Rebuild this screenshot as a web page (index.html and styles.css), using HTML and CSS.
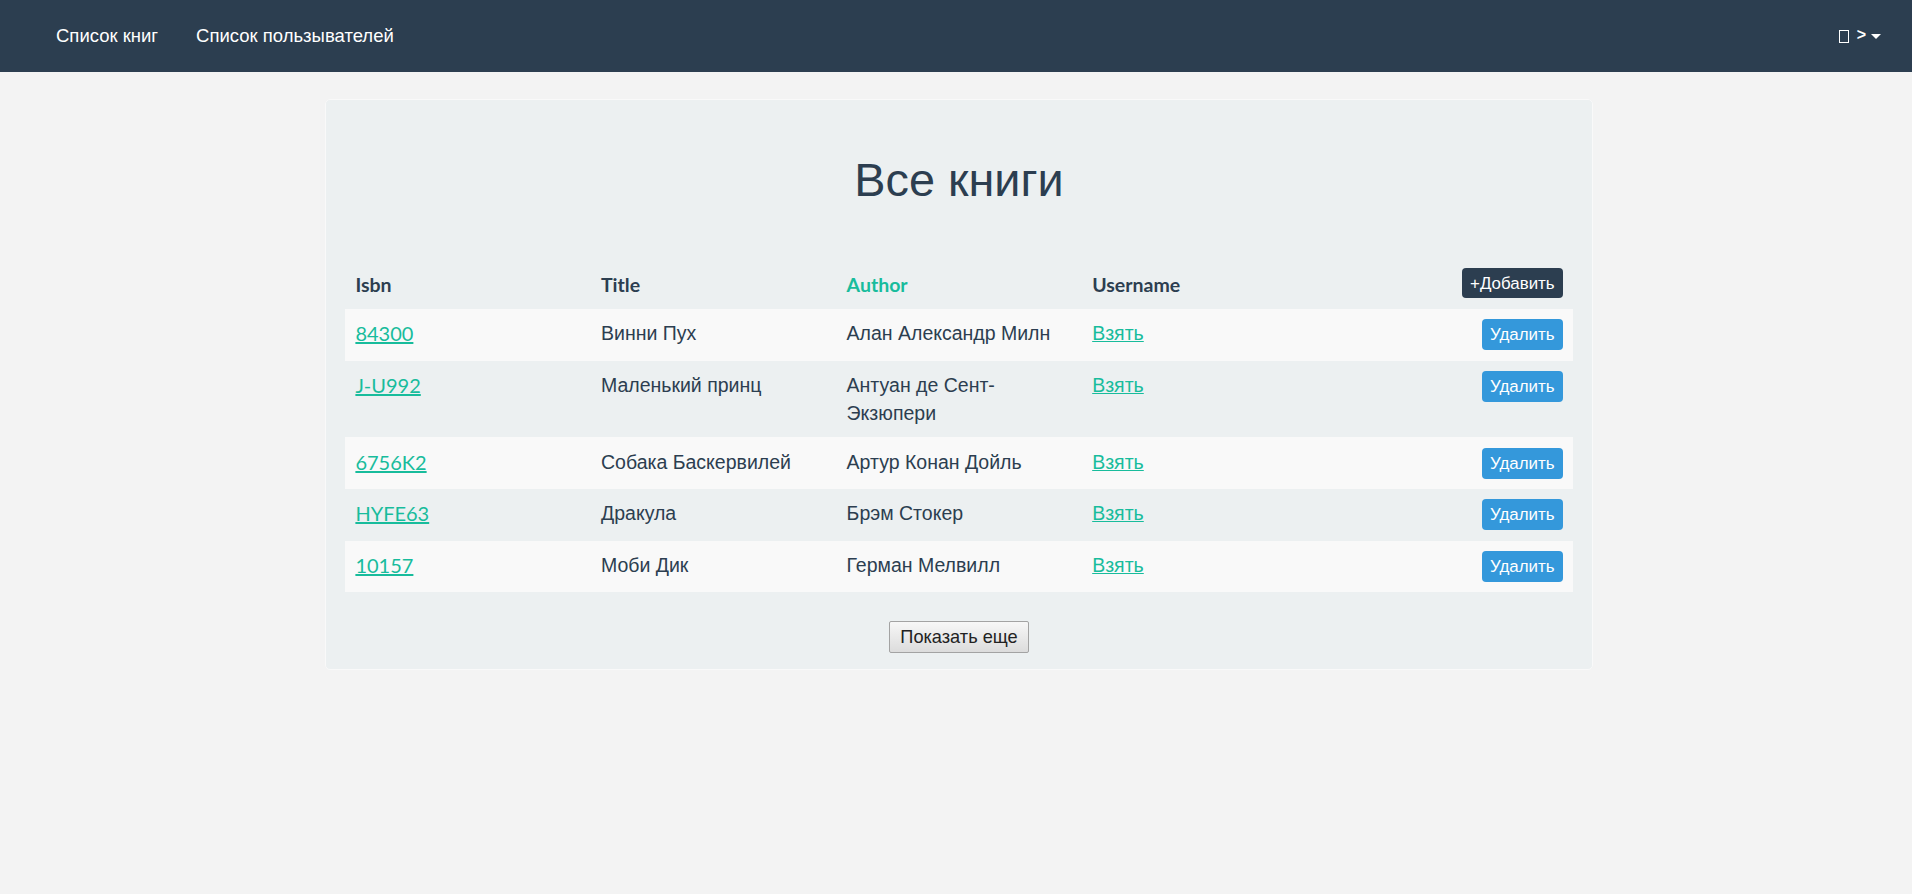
FILE: index.html
```html
<!DOCTYPE html>
<html lang="ru">
<head>
<meta charset="utf-8">
<title>Все книги</title>
<link rel="stylesheet" href="styles.css">
</head>
<body>
<nav class="navbar">
  <ul class="nav-left">
    <li><a class="nav-link" href="#">Список книг</a></li>
    <li><a class="nav-link" href="#">Список пользывателей</a></li>
  </ul>
  <div class="nav-right">
    <span class="tofu"></span>
    <span class="gt">&gt;</span>
    <span class="caret"></span>
  </div>
</nav>
<main class="page">
  <section class="well">
    <h1 class="title">Все книги</h1>
    <table class="books">
      <thead>
        <tr>
          <th>Isbn</th>
          <th>Title</th>
          <th class="sorted">Author</th>
          <th>Username</th>
          <th class="act"><button class="btn btn-add">+Добавить</button></th>
        </tr>
      </thead>
      <tbody>
        <tr>
          <td><a class="isbn" href="#">84300</a></td>
          <td>Винни Пух</td>
          <td>Алан Александр Милн</td>
          <td><a class="take" href="#">Взять</a></td>
          <td class="act"><button class="btn btn-del">Удалить</button></td>
        </tr>
        <tr>
          <td><a class="isbn" href="#">J-U992</a></td>
          <td>Маленький принц</td>
          <td>Антуан де Сент-Экзюпери</td>
          <td><a class="take" href="#">Взять</a></td>
          <td class="act"><button class="btn btn-del">Удалить</button></td>
        </tr>
        <tr>
          <td><a class="isbn" href="#">6756K2</a></td>
          <td>Собака Баскервилей</td>
          <td>Артур Конан Дойль</td>
          <td><a class="take" href="#">Взять</a></td>
          <td class="act"><button class="btn btn-del">Удалить</button></td>
        </tr>
        <tr>
          <td><a class="isbn" href="#">HYFE63</a></td>
          <td>Дракула</td>
          <td>Брэм Стокер</td>
          <td><a class="take" href="#">Взять</a></td>
          <td class="act"><button class="btn btn-del">Удалить</button></td>
        </tr>
        <tr>
          <td><a class="isbn" href="#">10157</a></td>
          <td>Моби Дик</td>
          <td>Герман Мелвилл</td>
          <td><a class="take" href="#">Взять</a></td>
          <td class="act"><button class="btn btn-del">Удалить</button></td>
        </tr>
      </tbody>
    </table>
    <div class="more">
      <button class="btn-more">Показать еще</button>
    </div>
  </section>
</main>
</body>
</html>
```
FILE: styles.css
```css
html, body {
  margin: 0;
  padding: 0;
}

body {
  background: #f3f3f3;
  color: #2c3e50;
  font-family: "Liberation Sans", Arial, sans-serif;
  font-size: 19.5px;
  line-height: 27.86px;
}

/* ---------- navbar ---------- */
.navbar {
  height: 72px;
  background: #2c3e50;
  display: flex;
  align-items: center;
  justify-content: space-between;
  padding: 0 31px 0 37px;
  box-sizing: border-box;
}

.nav-left {
  list-style: none;
  margin: 0;
  padding: 0;
  display: flex;
}

.nav-link {
  display: block;
  padding: 0 19px;
  color: #ffffff;
  text-decoration: none;
  font-size: 18.5px;
  line-height: 27px;
  position: relative;
  top: -1px;
}

.nav-right {
  display: flex;
  align-items: center;
  color: #ffffff;
}

.tofu {
  display: inline-block;
  width: 8px;
  height: 11px;
  border: 1px solid #ffffff;
  margin-right: 8px;
  margin-left: 1px;
}

.gt {
  font-family: "Liberation Sans", Arial, sans-serif;
  font-weight: 700;
  font-size: 16px;
  line-height: 16px;
  margin-right: 5px;
  position: relative;
  top: -1px;
}

.caret {
  display: inline-block;
  width: 0;
  height: 0;
  border-top: 5px solid #ffffff;
  border-left: 5px solid transparent;
  border-right: 5px solid transparent;
}

/* ---------- page ---------- */
.page {
  padding: 27px 0 0 325px;
}

.well {
  width: 1268px;
  box-sizing: border-box;
  background: #ecf0f1;
  border: 1px solid #f9f9f9;
  border-radius: 5px;
  padding: 55px 19px 16px 19px;
}

.title {
  margin: 0;
  font-size: 46.8px;
  font-weight: 400;
  line-height: 1.1;
  text-align: center;
}

/* ---------- table ---------- */
.books {
  width: 100%;
  margin-top: 51.5px;
  border-collapse: collapse;
  table-layout: fixed;
}

.books th,
.books td {
  padding: 11.6px 10.4px 9.2px;
  text-align: left;
  vertical-align: top;
}

.books thead th {
  padding: 10.4px;
  font-family: Lato, "Liberation Sans", sans-serif;
  font-weight: 700;
  vertical-align: bottom;
}

.books thead th.sorted {
  color: #18bc9c;
}

.books tbody tr:nth-child(odd) {
  background: #f9f9f9;
}

.books .act {
  text-align: right;
}

.isbn {
  font-family: Lato, "Liberation Sans", sans-serif;
  font-size: 20px;
  color: #18bc9c;
  text-decoration: underline;
}

.take {
  color: #18bc9c;
  text-decoration: underline;
}

/* ---------- buttons ---------- */
.btn {
  border: none;
  border-radius: 4px;
  color: #ffffff;
  font-family: "Liberation Sans", Arial, sans-serif;
  font-size: 16.9px;
  line-height: 25px;
  padding: 3px 8px;
  cursor: pointer;
}

.btn-del {
  background: #3498db;
  position: relative;
  top: -1px;
}

.btn-add {
  background: #2c3e50;
  padding: 2.5px 8px;
  vertical-align: bottom;
}

.more {
  display: flex;
  justify-content: center;
  margin-top: 29px;
}

.btn-more {
  height: 32px;
  padding: 0 10px;
  font-family: "Liberation Sans", Arial, sans-serif;
  font-size: 18.2px;
  color: #222222;
  background: linear-gradient(#f7f7f7, #dcdcdc);
  border: 1px solid #a3a3a3;
  border-radius: 2px;
}
```
